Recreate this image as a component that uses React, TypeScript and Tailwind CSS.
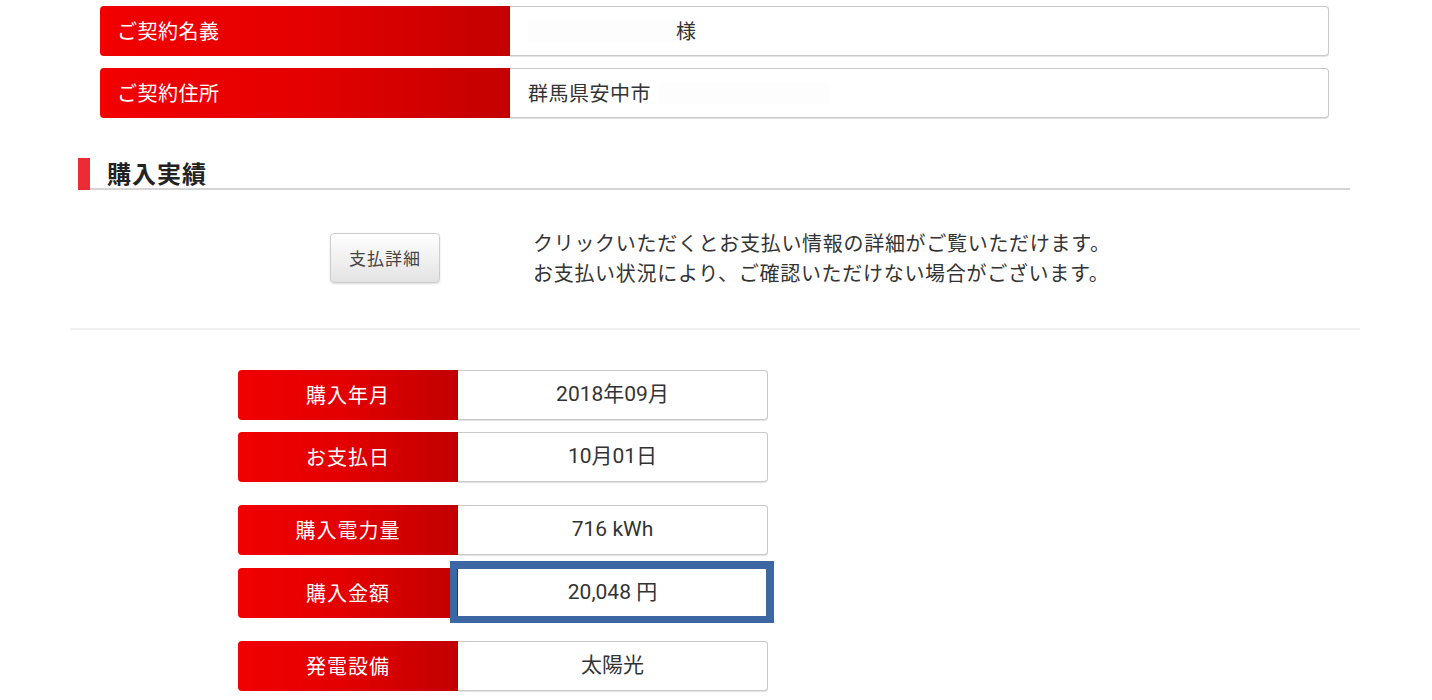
import React from 'react';

const font = { fontFamily: '"Noto Sans CJK JP", "Noto Sans", Roboto, sans-serif' };
const valueFont = { fontFamily: 'Roboto, "Noto Sans CJK JP", sans-serif' };

const InfoRow: React.FC<{ label: string; children: React.ReactNode }> = ({ label, children }) => (
  <div className="flex h-[50px]">
    <div className="w-[410px] shrink-0 flex items-center pl-[17px] rounded-l-[4px] bg-gradient-to-r from-[#f20000] via-[#e40000] to-[#c40000] text-white text-[20px] tracking-[0.5px]">
      {label}
    </div>
    <div className="flex-1 flex items-center pl-[18px] border border-l-0 border-[#c9c9c9] rounded-r-[4px] bg-white shadow-[0_1px_1px_rgba(0,0,0,0.12)] text-[20px] text-[#333] tracking-[0.5px]">
      {children}
    </div>
  </div>
);

const DataRow: React.FC<{ label: string; value: string; highlight?: boolean }> = ({ label, value, highlight }) => (
  <div className="flex h-[50px]">
    <div className="w-[220px] shrink-0 flex items-center justify-center rounded-l-[4px] bg-gradient-to-r from-[#f20000] via-[#e20000] to-[#c20000] text-white text-[20px] tracking-[1px]">
      {label}
    </div>
    <div
      className="relative flex-1 flex items-center justify-center border border-l-0 border-[#c9c9c9] rounded-r-[4px] bg-white shadow-[0_1px_1px_rgba(0,0,0,0.12)] text-[21px] text-[#333]"
      style={valueFont}
    >
      {value}
      {highlight && (
        <div className="absolute -left-[8px] -top-[8px] -right-[7px] -bottom-[6px] border-[7px] border-t-[8px] border-r-[8px] border-[#3c67a4]" />
      )}
    </div>
  </div>
);

export default function App() {
  return (
    <div className="w-[1432px] h-[700px] bg-white overflow-hidden" style={font}>
      {/* contract info */}
      <div className="ml-[100px] w-[1229px] pt-[6px] flex flex-col gap-[12px]">
        <InfoRow label="ご契約名義">
          <span className="w-[148px] h-[22px] bg-[#fdfdfd]" />
          <span>様</span>
        </InfoRow>
        <InfoRow label="ご契約住所">
          <span>群馬県安中市</span>
          <span className="ml-[8px] w-[170px] h-[22px] bg-[#fdfdfd]" />
        </InfoRow>
      </div>

      {/* section heading */}
      <div className="ml-[78px] w-[1272px] mt-[40px] flex items-stretch h-[32px] border-b-2 border-[#d4d4d4]">
        <div className="w-[12px] bg-[#ec2b35] mb-[-2px]" />
        <h2 className="ml-[17px] text-[24px] font-bold text-[#222] tracking-[1px] leading-[30px]">購入実績</h2>
      </div>

      {/* payment detail */}
      <div className="ml-[330px] mt-[38px] flex items-center">
        <button className="w-[110px] h-[50px] rounded-[4px] border border-[#cdcdcd] bg-gradient-to-b from-white to-[#e3e3e3] shadow-[0_1px_2px_rgba(0,0,0,0.15)] text-[17px] text-[#444] tracking-[1px]">
          支払詳細
        </button>
        <div className="ml-[93px] text-[20px] leading-[30px] text-[#333] tracking-[0.7px]">
          <p>クリックいただくとお支払い情報の詳細がご覧いただけます。</p>
          <p>お支払い状況により、ご確認いただけない場合がございます。</p>
        </div>
      </div>

      <div className="ml-[70px] w-[1290px] mt-[40px] h-[2px] bg-[#efefef]" />

      {/* purchase table */}
      <div className="ml-[238px] w-[530px] mt-[40px] flex flex-col gap-[23px]">
        <div className="flex flex-col gap-[12px]">
          <DataRow label="購入年月" value="2018年09月" />
          <DataRow label="お支払日" value="10月01日" />
        </div>
        <div className="flex flex-col gap-[13px]">
          <DataRow label="購入電力量" value="716 kWh" />
          <DataRow label="購入金額" value="20,048 円" highlight />
        </div>
        <DataRow label="発電設備" value="太陽光" />
      </div>
    </div>
  );
}
